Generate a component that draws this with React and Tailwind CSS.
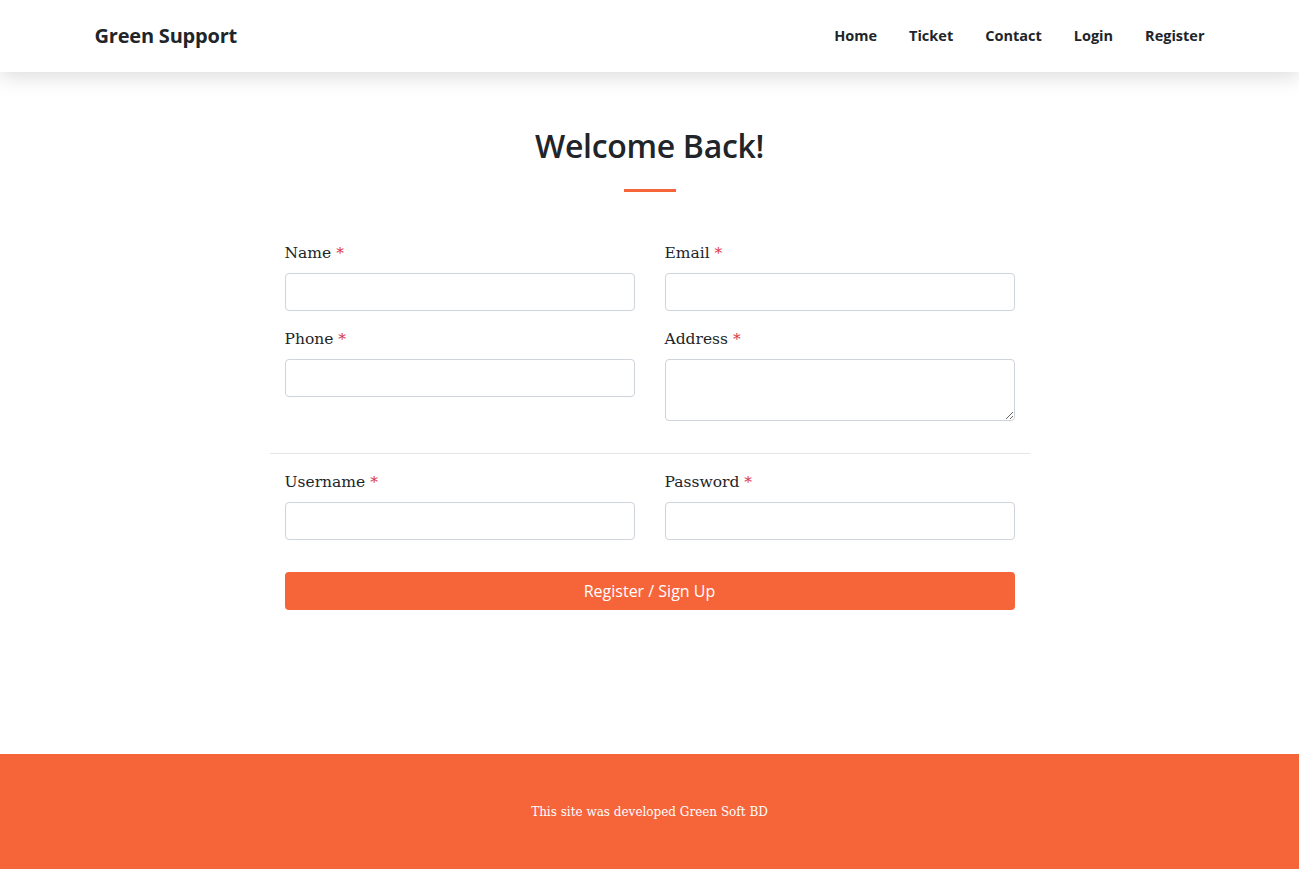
export default function App() {
  const sans = { fontFamily: '"Open Sans", "Noto Sans", sans-serif' };

  const Field = ({ label, textarea }) => (
    <div className="mb-4">
      <label
        className="mb-2 block text-[15.5px] leading-6 text-[#212529]"
        style={{ fontFamily: '"DejaVu Serif", serif' }}
      >
        {label} <span className="text-[#dc3545]">*</span>
      </label>
      {textarea ? (
        <textarea className="block h-[62px] w-full rounded border border-[#ced4da] bg-white px-3 py-1.5" />
      ) : (
        <input
          type="text"
          className="block h-[38px] w-full rounded border border-[#ced4da] bg-white px-3"
        />
      )}
    </div>
  );

  return (
    <div className="flex min-h-[869px] flex-col bg-white text-[#212529]">
      <nav className="relative z-10 h-[72px] bg-white shadow-[0_4px_20px_rgba(0,0,0,0.15)]">
        <div className="mx-auto flex h-full w-[1140px] items-center justify-between px-[15px]" style={sans}>
          <a className="text-[20px] font-bold tracking-[-0.2px] text-[#212529]">Green Support</a>
          <ul className="-mr-4 flex items-center">
            {["Home", "Ticket", "Contact", "Login", "Register"].map((item) => (
              <li key={item}>
                <a className="block px-4 text-[14.5px] font-bold text-[#212529]">{item}</a>
              </li>
            ))}
          </ul>
        </div>
      </nav>

      <main className="flex-1">
        <div className="mx-auto w-[760px] pt-[52px]">
          <h1 className="text-center text-[32px] leading-[44px] font-semibold tracking-[-0.3px] text-[#212529]" style={sans}>
            Welcome Back!
          </h1>
          <div className="mx-auto mt-[21px] h-[3px] w-[52px] bg-[#f6643a]" />

          <form className="mt-[49px]">
            <div className="grid grid-cols-2 gap-x-[30px] px-[15px]">
              <Field label="Name" />
              <Field label="Email" />
              <div>
                <Field label="Phone" />
              </div>
              <Field label="Address" textarea />
            </div>
            <hr className="mt-4 mb-4 border-t border-[#e5e5e5]" />
            <div className="grid grid-cols-2 gap-x-[30px] px-[15px]">
              <Field label="Username" />
              <Field label="Password" />
            </div>
            <div className="mt-4 px-[15px]">
              <button
                type="button"
                className="h-[38px] w-full rounded bg-[#f6643a] text-[16px] font-medium text-white"
                style={sans}
              >
                Register / Sign Up
              </button>
            </div>
          </form>
        </div>
      </main>

      <footer className="flex h-[115px] items-center justify-center bg-[#f6643a]">
        <p className="text-[12px] text-white" style={{ fontFamily: '"DejaVu Serif", serif' }}>
          This site was developed Green Soft BD
        </p>
      </footer>
    </div>
  );
}
